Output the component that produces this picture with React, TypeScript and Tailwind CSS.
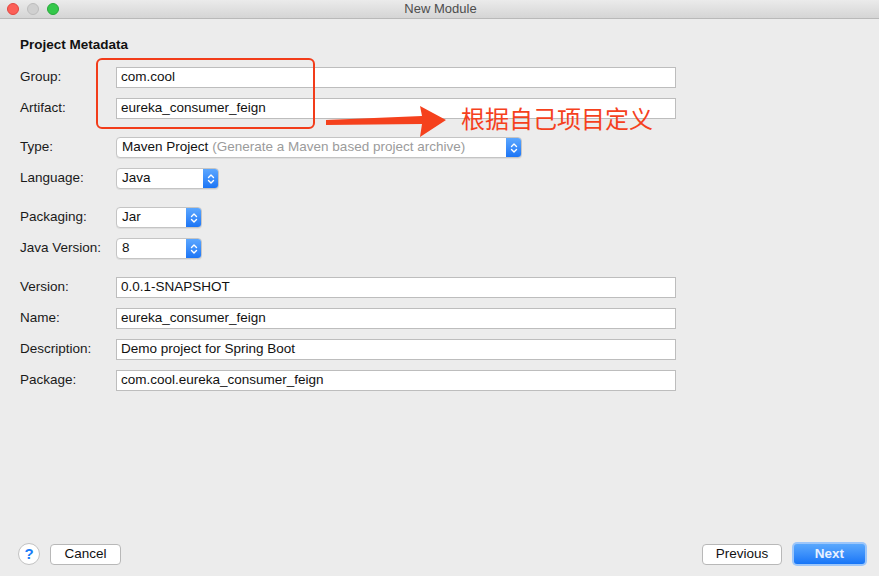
import React from "react";

const font = { fontFamily: '"Liberation Sans", Arial, sans-serif' };

const Chevrons = () => (
  <svg width="8" height="12" viewBox="0 0 8 12" fill="none" stroke="white" strokeWidth="1.4" strokeLinecap="round" strokeLinejoin="round">
    <path d="M1.5 4.5 L4 2 L6.5 4.5" />
    <path d="M1.5 7.5 L4 10 L6.5 7.5" />
  </svg>
);

const TextField = ({ value }: { value: string }) => (
  <div className="h-[21px] w-[560px] bg-white border border-[#bdbdbd] pl-[4px] flex items-center text-[13.5px] text-[#111]">
    {value}
  </div>
);

const Select = ({ width, children }: { width: string; children: React.ReactNode }) => (
  <div className={`${width} h-[21px] flex rounded-[4px] border border-[#c4c4c4] bg-white overflow-hidden shadow-[0_1px_0_rgba(0,0,0,0.06)]`}>
    <div className="flex-1 pl-[5px] flex items-center text-[13.5px] text-[#111] whitespace-nowrap overflow-hidden">{children}</div>
    <div className="w-[16px] -my-px -mr-px rounded-r-[4px] bg-gradient-to-b from-[#5ea9ff] to-[#1672f5] flex items-center justify-center">
      <Chevrons />
    </div>
  </div>
);

const Row = ({ label, children }: { label: string; children: React.ReactNode }) => (
  <div className="flex items-center h-[21px]">
    <div className="w-[96px] text-[13.5px] text-[#1a1a1a]">{label}</div>
    {children}
  </div>
);

export default function App() {
  return (
    <div className="relative w-[879px] h-[576px] bg-[#ececec] flex flex-col overflow-hidden" style={font}>
      {/* title bar */}
      <div className="h-[19px] flex items-center relative bg-gradient-to-b from-[#ebebeb] to-[#d5d5d5] border-b border-[#b9b9b9]">
        <div className="flex gap-[8px] pl-[7px]">
          <span className="w-[12px] h-[12px] rounded-full bg-[#fc5f57] border border-[#e2463f]" />
          <span className="w-[12px] h-[12px] rounded-full bg-[#d0d0d0] border border-[#bdbdbd]" />
          <span className="w-[12px] h-[12px] rounded-full bg-[#34c84a] border border-[#28a83b]" />
        </div>
        <div className="absolute inset-0 flex items-center justify-center text-[13px] text-[#4d4d4d] pl-[2px]">New Module</div>
      </div>

      {/* form */}
      <div className="flex-1 pl-[20px] pt-[18px]">
        <div className="text-[13.5px] font-bold text-[#111] h-[16px] leading-[16px]">Project Metadata</div>
        <div className="mt-[14px] flex flex-col gap-[10px]">
          <Row label="Group:"><TextField value="com.cool" /></Row>
          <Row label="Artifact:"><TextField value="eureka_consumer_feign" /></Row>
        </div>
        <div className="mt-[18px] flex flex-col gap-[10px]">
          <Row label="Type:">
            <Select width="w-[406px]">
              <span>Maven Project</span>
              <span className="text-[#9b9b9b] ml-[4px]">(Generate a Maven based project archive)</span>
            </Select>
          </Row>
          <Row label="Language:"><Select width="w-[103px]">Java</Select></Row>
        </div>
        <div className="mt-[18px] flex flex-col gap-[10px]">
          <Row label="Packaging:"><Select width="w-[86px]">Jar</Select></Row>
          <Row label="Java Version:"><Select width="w-[86px]">8</Select></Row>
        </div>
        <div className="mt-[18px] flex flex-col gap-[10px]">
          <Row label="Version:"><TextField value="0.0.1-SNAPSHOT" /></Row>
          <Row label="Name:"><TextField value="eureka_consumer_feign" /></Row>
          <Row label="Description:"><TextField value="Demo project for Spring Boot" /></Row>
          <Row label="Package:"><TextField value="com.cool.eureka_consumer_feign" /></Row>
        </div>
      </div>

      {/* footer */}
      <div className="h-[34px] mb-[5px] flex items-center pl-[18px] pr-[12px]">
        <div className="w-[22px] h-[22px] rounded-full bg-white border border-[#c2c2c2] flex items-center justify-center text-[15px] text-[#1a7cf7] font-bold">?</div>
        <div className="ml-[10px] w-[71px] h-[21px] rounded-[4px] bg-white border border-[#b8b8b8] flex items-center justify-center text-[13.5px] text-[#111]">Cancel</div>
        <div className="flex-1" />
        <div className="w-[80px] h-[21px] rounded-[4px] bg-white border border-[#b8b8b8] flex items-center justify-center text-[13.5px] text-[#111]">Previous</div>
        <div className="ml-[10px] w-[75px] h-[24px] rounded-[5px] p-[2px] bg-[#9cc6fa]">
          <div className="w-full h-full rounded-[3px] bg-gradient-to-b from-[#5aa8fd] to-[#1675f7] flex items-center justify-center text-[13.5px] text-[#e8f1ff] font-semibold">Next</div>
        </div>
      </div>

      {/* annotation overlay */}
      <div className="absolute left-[96px] top-[58px] w-[219px] h-[71px] border-2 border-[#f23c1a] rounded-[6px]" />
      <svg className="absolute left-0 top-0" width="879" height="576" style={{ pointerEvents: "none" }}>
        <polygon points="326,120 422,116 420,106 446,120 420,137 422,124 326,125" fill="#f5411d" />
      </svg>
      <div className="absolute left-[461px] top-[102px] text-[24px] leading-[32px] text-[#f5411d]" style={{ fontFamily: '"Noto Sans CJK SC", sans-serif' }}>
        根据自己项目定义
      </div>
    </div>
  );
}
